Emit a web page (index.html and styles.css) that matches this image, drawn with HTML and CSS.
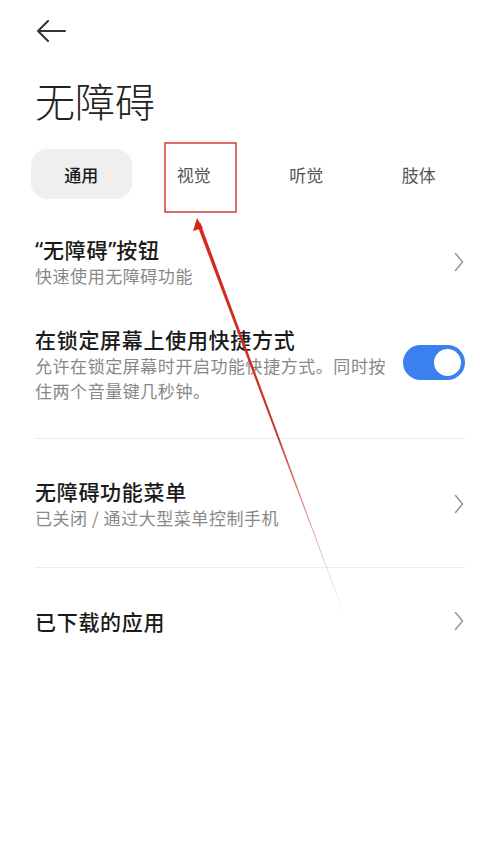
FILE: index.html
```html
<!DOCTYPE html>
<html lang="zh-CN">
<head>
<meta charset="utf-8">
<link rel="stylesheet" href="styles.css">
</head>
<body>
<div class="page">
  <header class="header">
    <svg class="back" width="30" height="22" viewBox="0 0 30 22">
      <path d="M2 11 H29 M12 1 L2 11 L12 21" fill="none" stroke="#333" stroke-width="2" stroke-linecap="round" stroke-linejoin="round"/>
    </svg>
  </header>
  <h1 class="title">无障碍</h1>
  <nav class="tabs">
    <div class="tab"><span class="tab-pill active">通用</span></div>
    <div class="tab"><span class="tab-pill">视觉</span></div>
    <div class="tab"><span class="tab-pill">听觉</span></div>
    <div class="tab"><span class="tab-pill">肢体</span></div>
  </nav>

  <section class="group group-first">
    <div class="item">
      <div class="item-text">
        <div class="item-title"><span class="q">“</span>无障碍<span class="q">”</span>按钮</div>
        <div class="item-sub">快速使用无障碍功能</div>
      </div>
      <svg class="chev" width="10" height="20" viewBox="0 0 10 20"><path d="M1.5 1.5 L8.5 10 L1.5 18.5" fill="none" stroke="#9a9a9a" stroke-width="1.6" stroke-linecap="round" stroke-linejoin="round"/></svg>
    </div>
    <div class="item">
      <div class="item-text">
        <div class="item-title">在锁定屏幕上使用快捷方式</div>
        <div class="item-sub">允许在锁定屏幕时开启功能快捷方式。同时按住两个音量键几秒钟。</div>
      </div>
      <div class="toggle"><span class="knob"></span></div>
    </div>
  </section>

  <section class="group group-mid">
    <div class="item">
      <div class="item-text">
        <div class="item-title">无障碍功能菜单</div>
        <div class="item-sub">已关闭 / 通过大型菜单控制手机</div>
      </div>
      <svg class="chev" width="10" height="20" viewBox="0 0 10 20"><path d="M1.5 1.5 L8.5 10 L1.5 18.5" fill="none" stroke="#9a9a9a" stroke-width="1.6" stroke-linecap="round" stroke-linejoin="round"/></svg>
    </div>
  </section>

  <section class="group group-last">
    <div class="item">
      <div class="item-text">
        <div class="item-title">已下载的应用</div>
      </div>
      <svg class="chev" width="10" height="20" viewBox="0 0 10 20"><path d="M1.5 1.5 L8.5 10 L1.5 18.5" fill="none" stroke="#9a9a9a" stroke-width="1.6" stroke-linecap="round" stroke-linejoin="round"/></svg>
    </div>
  </section>

  <svg class="annot" width="500" height="856" viewBox="0 0 500 856">
    <defs>
      <linearGradient id="fade" x1="0" y1="218" x2="0" y2="612" gradientUnits="userSpaceOnUse">
        <stop offset="0" stop-color="#d8261c"/>
        <stop offset="0.55" stop-color="#c8352a"/>
        <stop offset="1" stop-color="#e8c8c0" stop-opacity="0.4"/>
      </linearGradient>
    </defs>
    <rect x="165" y="143" width="71" height="69" fill="none" stroke="#d2493e" stroke-width="1.6"/>
    <polygon points="196.8,224 200.2,222.8 343.5,612 343,612" fill="url(#fade)"/>
    <polygon points="197,218 193,231 203,228" fill="#d8261c"/>
  </svg>
</div>
</body>
</html>
```
FILE: styles.css
```css
* { box-sizing: border-box; }
html, body { margin: 0; padding: 0; background: #fff; }
body {
  font-family: "Noto Sans CJK SC", "Noto Sans", sans-serif;
  color: #1a1a1a;
}
.page {
  position: relative;
  width: 500px;
  min-height: 856px;
  padding: 0 35px;
}
.header {
  height: 62px;
  display: flex;
  align-items: center;
}
.back { margin-left: 1px; }
.title {
  margin: 13px 0 0;
  font-size: 40px;
  line-height: 50px;
  font-weight: 300;
  color: #222;
}
.tabs {
  margin: 24px -10px 0;
  display: grid;
  grid-template-columns: repeat(4, 1fr);
  height: 50px;
}
.tab {
  display: flex;
  padding: 0 6px;
}
.tab-pill {
  flex: 1;
  display: flex;
  align-items: center;
  justify-content: center;
  border-radius: 16px;
  font-size: 17px;
  color: #555;
}
.tab-pill.active {
  background: #efefef;
  color: #1a1a1a;
  font-weight: 500;
}
.group { border-bottom: 1px solid #ececec; display: flex; flex-direction: column; }
.group-first { padding: 36px 0 35px; gap: 37px; }
.group-mid { padding: 38px 0 37px; }
.group-last { padding: 39px 0 0; border-bottom: none; }
.item {
  display: flex;
  align-items: center;
  justify-content: space-between;
  gap: 14px;
}
.item-text { flex: 1; min-width: 0; }
.item-title {
  font-size: 21px;
  line-height: 28px;
  height: 28px;
  font-weight: 500;
  letter-spacing: 0.7px;
  color: #1a1a1a;
}
.q {
  font-family: "Noto Sans", "Open Sans", sans-serif;
  letter-spacing: 0;
  line-height: 1;
}
.item-sub {
  font-size: 17px;
  line-height: 25px;
  letter-spacing: 0.55px;
  color: #888;
}
.chev { flex: none; margin-right: 1px; }
.toggle {
  flex: none;
  width: 62px;
  height: 35px;
  border-radius: 18px;
  background: #3a80ee;
  display: flex;
  align-items: center;
  justify-content: flex-end;
  padding-right: 4px;
  margin-top: -4px;
}
.knob {
  width: 27px;
  height: 27px;
  border-radius: 50%;
  background: #fff;
}
.annot {
  position: absolute;
  left: 0;
  top: 0;
  pointer-events: none;
}
```
